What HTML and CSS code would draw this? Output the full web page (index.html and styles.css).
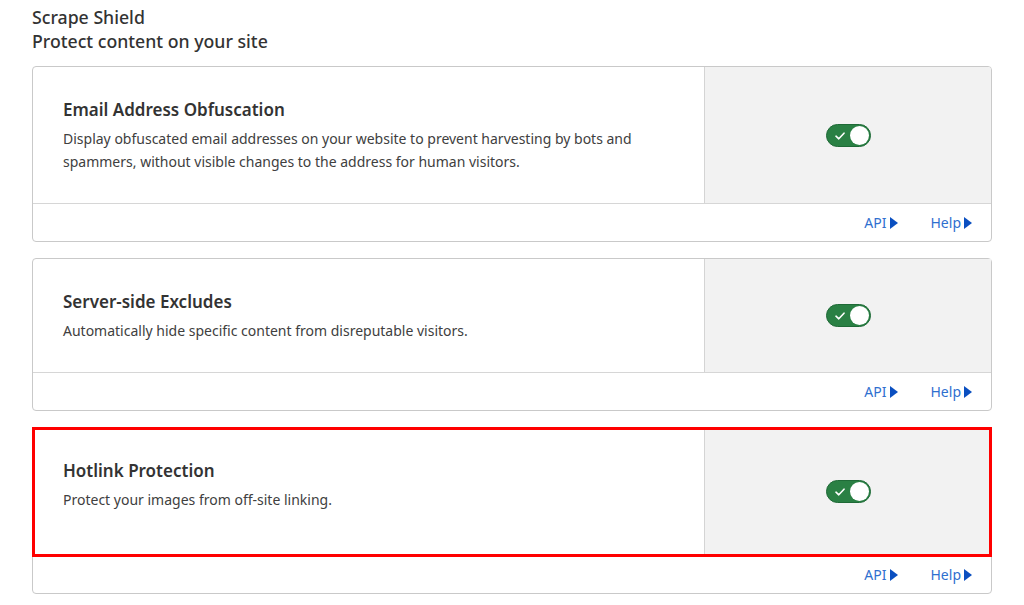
FILE: index.html
```html
<!DOCTYPE html>
<html lang="en">
<head>
  <meta charset="UTF-8" />
  <title>Scrape Shield</title>
  <link rel="stylesheet" href="styles.css">
</head>
<body>

  <!-- Section header -->
  <div class="section-head">
    <div class="section-title">Scrape Shield</div>
    <div class="section-sub">Protect content on your site</div>
  </div>

  <div class="cards">

    <div class="card">
      <div class="card-body">
        <div class="info">
          <div class="card-title">Email Address Obfuscation</div>
          <div class="card-desc">Display obfuscated email addresses on your website to prevent harvesting by bots and spammers, without visible changes to the address for human visitors.</div>
        </div>
        <div class="control">
          <div class="toggle on">
            <svg class="check" viewBox="0 0 10 8" width="10" height="8"><path d="M1 4.2 L3.8 6.8 L9 1.2" /></svg>
            <span class="knob"></span>
          </div>
        </div>
      </div>
      <div class="card-foot">
        <a class="doc-link" href="#">API<span class="arrow"></span></a>
        <a class="doc-link" href="#">Help<span class="arrow"></span></a>
      </div>
    </div>

    <div class="card">
      <div class="card-body">
        <div class="info">
          <div class="card-title">Server-side Excludes</div>
          <div class="card-desc">Automatically hide specific content from disreputable visitors.</div>
        </div>
        <div class="control">
          <div class="toggle on">
            <svg class="check" viewBox="0 0 10 8" width="10" height="8"><path d="M1 4.2 L3.8 6.8 L9 1.2" /></svg>
            <span class="knob"></span>
          </div>
        </div>
      </div>
      <div class="card-foot">
        <a class="doc-link" href="#">API<span class="arrow"></span></a>
        <a class="doc-link" href="#">Help<span class="arrow"></span></a>
      </div>
    </div>

    <div class="card">
      <div class="card-body marked">
        <div class="info">
          <div class="card-title">Hotlink Protection</div>
          <div class="card-desc">Protect your images from off-site linking.</div>
        </div>
        <div class="control">
          <div class="toggle on">
            <svg class="check" viewBox="0 0 10 8" width="10" height="8"><path d="M1 4.2 L3.8 6.8 L9 1.2" /></svg>
            <span class="knob"></span>
          </div>
        </div>
      </div>
      <div class="card-foot">
        <a class="doc-link" href="#">API<span class="arrow"></span></a>
        <a class="doc-link" href="#">Help<span class="arrow"></span></a>
      </div>
    </div>

  </div>

</body>
</html>
```

FILE: styles.css
```css
* {
  margin: 0;
  padding: 0;
  box-sizing: border-box;
}

body {
  font-family: 'Noto Sans', 'Open Sans', sans-serif;
  background: #fff;
  color: #333;
  padding: 5px 32px 0 32px;
  width: 1024px;
  height: 605px;
  overflow: hidden;
}

/* Header */
.section-head {
  margin-bottom: 13px;
}

.section-title,
.section-sub {
  font-size: 17.7px;
  line-height: 24px;
  font-weight: 500;
  color: #333;
}

/* Cards */
.cards {
  display: flex;
  flex-direction: column;
  gap: 16px;
}

.card {
  border: 1px solid #c9c9c9;
  border-radius: 4px;
  width: 960px;
}

.card-body {
  display: flex;
  min-height: 114px;
  border-bottom: 1px solid #d6d6d6;
}

.card:first-child .card-body {
  min-height: 137px;
}

/* highlighted row */
.card-body.marked {
  min-height: 128px;
  outline: 3px solid #ff0000;
  outline-offset: -2px;
}

.info {
  flex: 1;
  padding: 31px 30px 28px 30px;
}

.card-title {
  font-size: 17px;
  line-height: 24px;
  font-weight: 600;
  color: #333;
  margin-bottom: 5px;
}

.card-desc {
  font-size: 14px;
  line-height: 23px;
  color: #404040;
  max-width: 600px;
}

.control {
  width: 287px;
  background: #f2f2f2;
  border-left: 1px solid #d4d4d4;
  display: flex;
  align-items: center;
  justify-content: center;
}

.card:first-child .control {
  border-top-right-radius: 3px;
}

/* Toggle switch */
.toggle {
  position: relative;
  width: 45px;
  height: 23px;
  border-radius: 12px;
  background: #2a8044;
  border: 1px solid #1f6a37;
}

.toggle .check {
  position: absolute;
  left: 8px;
  top: 7px;
}

.toggle .check path {
  fill: none;
  stroke: #fff;
  stroke-width: 1.6;
  stroke-linecap: round;
  stroke-linejoin: round;
}

.toggle .knob {
  position: absolute;
  right: 1px;
  top: 1px;
  width: 19px;
  height: 19px;
  border-radius: 50%;
  background: #fff;
}

/* Footer links */
.card-foot {
  height: 37px;
  display: flex;
  align-items: center;
  justify-content: flex-end;
  gap: 33px;
  padding-right: 19px;
}

.doc-link {
  font-size: 14px;
  color: #2f6fcf;
  text-decoration: none;
  display: flex;
  align-items: center;
}

.doc-link .arrow {
  width: 0;
  height: 0;
  margin-left: 3px;
  border-top: 6px solid transparent;
  border-bottom: 6px solid transparent;
  border-left: 8px solid #0a4fc0;
}
```
